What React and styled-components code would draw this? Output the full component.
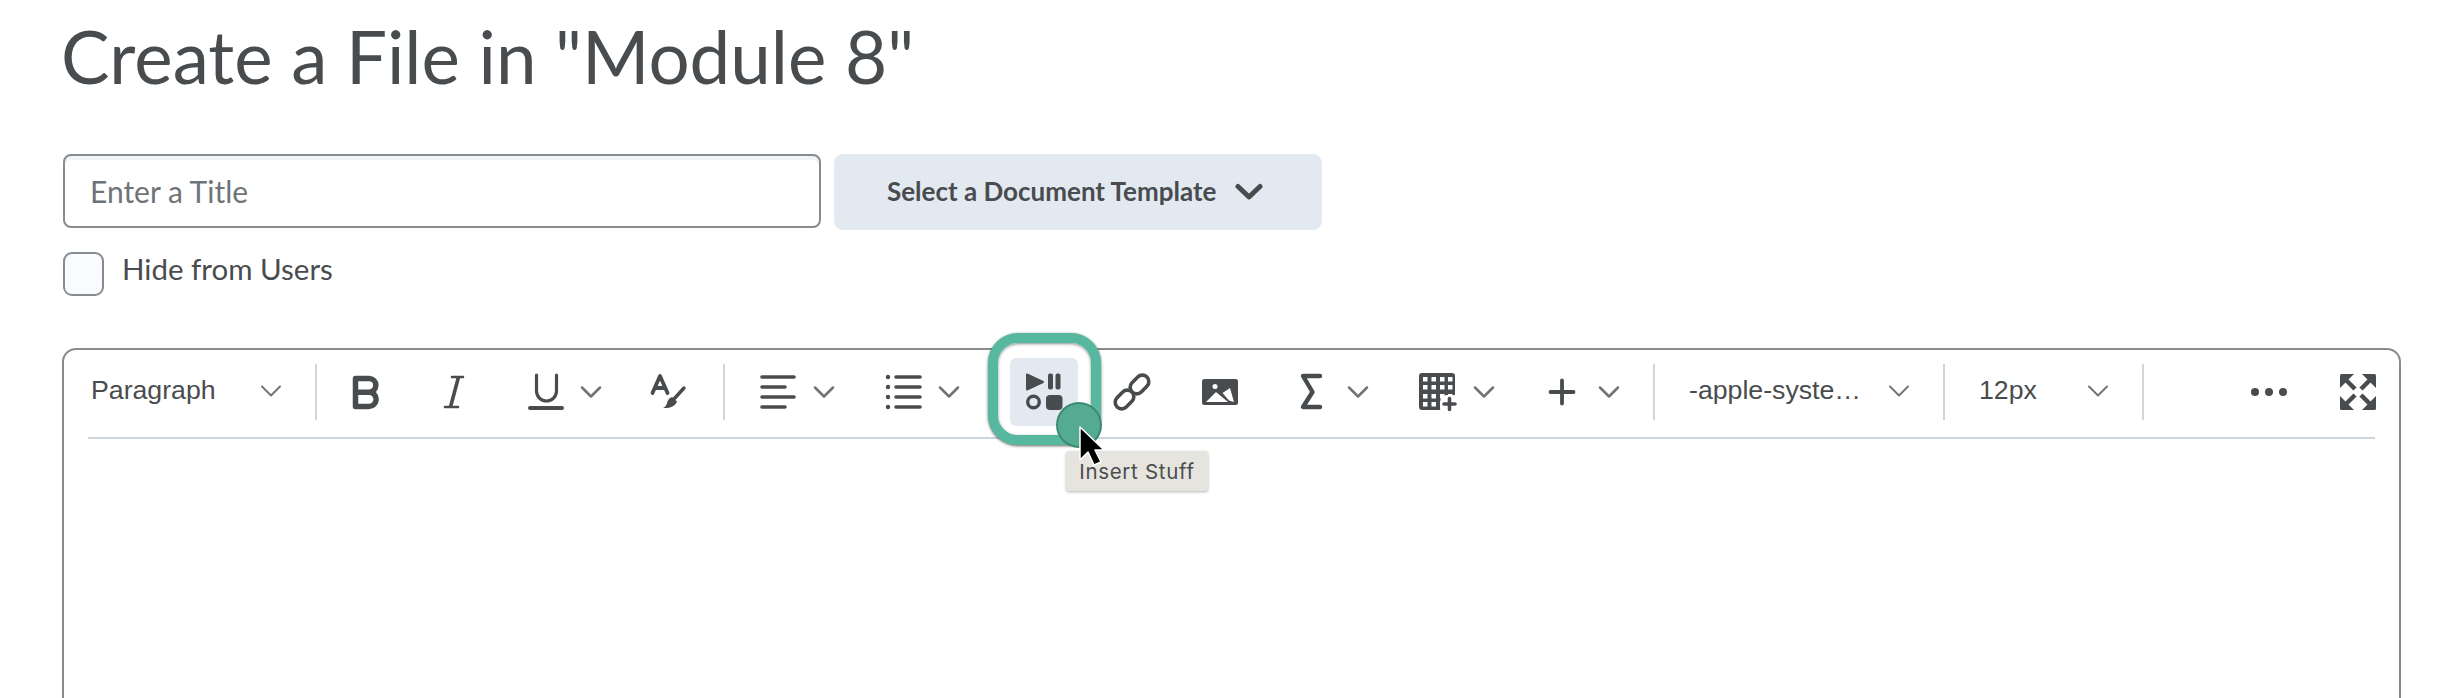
import React from "react";
import styled, { createGlobalStyle } from "styled-components";

const Global = createGlobalStyle`
  html, body { margin: 0; padding: 0; background: #fff; }
  body { font-family: Lato, "Liberation Sans", sans-serif; color: #494c4e; }
`;

const DARK = "#494c4e";

const Page = styled.div`
  height: 698px;
  overflow: hidden;
  box-sizing: border-box;
  padding: 0 51px 0 63px;
`;
const Title = styled.h1`
  margin: 0 0 0 -2px;
  height: 154px;
  padding-top: 10px;
  box-sizing: border-box;
  font: 400 72.7px/92px Lato, sans-serif;
  color: ${DARK};
`;
const FormRow = styled.div`
  display: flex;
  align-items: flex-start;
  gap: 13px;
`;
const TitleInput = styled.input`
  box-sizing: border-box;
  width: 758px;
  height: 74px;
  padding: 0 25px;
  border: 2px solid #868c8f;
  border-radius: 8px;
  background: #fff;
  box-shadow: inset 0 4px 0 #f2f3f4;
  font: 400 30px Lato, sans-serif;
  outline: none;
  &::placeholder { color: #6e7477; opacity: 1; }
`;
const TemplateButton = styled.button`
  box-sizing: border-box;
  width: 488px;
  height: 76px;
  padding: 0 0 2px 53px;
  display: flex;
  align-items: center;
  gap: 18px;
  border: 0;
  border-radius: 9px;
  background: #e3e9f1;
  color: ${DARK};
  font: 700 26px Lato, sans-serif;
`;
const CheckRow = styled.label`
  display: flex;
  align-items: flex-start;
  gap: 18px;
  margin-top: 22px;
  font: 400 29.5px/34px Lato, sans-serif;
  color: ${DARK};
`;
const CheckBox = styled.span`
  box-sizing: border-box;
  display: block;
  width: 41px;
  height: 44px;
  border: 2px solid #868c8f;
  border-radius: 9px;
  background: #f9fbff;
`;
const Editor = styled.section`
  box-sizing: border-box;
  margin: 52px 0 0 -1px;
  height: 500px;
  border: 2px solid #868c8f;
  border-radius: 14px;
  padding: 0 24px 0 24px;
  background: #fff;
`;
const Toolbar = styled.div`
  display: flex;
  align-items: center;
  height: 89px;
  box-sizing: border-box;
  padding: 14px 0 17px;
  border-bottom: 2px solid #ced5db;
`;
const Separator = styled.div`
  flex: none;
  width: 2px;
  height: 56px;
  background: #ced5db;
`;
const Select = styled.div`
  flex: none;
  box-sizing: border-box;
  width: ${(p) => p.$w}px;
  height: 56px;
  padding: 0 33px 3px ${(p) => p.$pl}px;
  display: flex;
  align-items: center;
  justify-content: space-between;
  font: 400 26.7px "Liberation Sans", Arial, sans-serif;
  color: ${DARK};
`;
const Group = styled.div`
  flex: none;
  display: flex;
  align-items: center;
  padding: 0 ${(p) => p.$pr || 0}px 0 ${(p) => p.$pl || 0}px;
`;
const EndGroup = styled(Group)`
  margin-left: auto;
  margin-right: -3px;
`;
const Cell = styled.div`
  flex: none;
  display: flex;
  align-items: center;
  justify-content: center;
  width: ${(p) => p.$w || 88}px;
  height: 56px;
  margin-left: ${(p) => p.$ml || 0}px;
`;
const EndCell = styled(Cell)`
  justify-content: flex-end;
`;
const SplitCell = styled(Cell)`
  justify-content: flex-start;
  padding-left: 13px;
  box-sizing: border-box;
`;
const IconSlot = styled.div`
  flex: none;
  width: 68px;
  display: flex;
  justify-content: center;
`;
const ArrowSlot = styled.div`
  flex: none;
  width: 26px;
  display: flex;
  justify-content: center;
`;
const ActiveButton = styled.div`
  position: relative;
  width: 68px;
  height: 68px;
`;
const Ring = styled.div`
  position: absolute;
  left: -22px;
  right: -23px;
  top: -25px;
  bottom: -19px;
  border: 10px solid #57b8a0;
  border-radius: 30px;
  background: #fff;
  box-shadow: 0 1px 3px rgba(0, 0, 0, 0.6), inset 0 1px 3px rgba(0, 0, 0, 0.45);
`;
const ActiveFace = styled.div`
  position: absolute;
  inset: 0;
  border-radius: 6px;
  background: #e3e9f1;
  display: flex;
  align-items: center;
  justify-content: center;
`;
const Dot = styled.div`
  position: absolute;
  left: 46px;
  top: 44px;
  width: 46px;
  height: 46px;
  box-sizing: border-box;
  border-radius: 50%;
  background: #55ab91;
  border: 2px solid #3b8a72;
`;
const Tooltip = styled.div`
  position: absolute;
  left: 56px;
  top: 93px;
  width: 142px;
  height: 40px;
  box-sizing: border-box;
  display: flex;
  align-items: center;
  justify-content: center;
  background: #e5e4df;
  border-radius: 3px;
  box-shadow: 0 1px 3px rgba(0, 0, 0, 0.3);
  font: 400 20.5px Inter, sans-serif;
  letter-spacing: 0.7px;
  color: #4c4c4c;
  white-space: nowrap;
`;
const Pointer = styled.svg`
  position: absolute;
  left: 67px;
  top: 66px;
`;

const Icon = ({ children }) => (
  <svg width="40" height="40" viewBox="0 0 40 40" fill="none" stroke={DARK} strokeLinecap="round" strokeLinejoin="round">
    {children}
  </svg>
);
const Chevron = ({ w = 2.5 }) => (
  <svg width="22" height="14" viewBox="0 0 22 14" fill="none" stroke="#6f7478" strokeWidth={w} strokeLinecap="round" strokeLinejoin="round">
    <path d="M2 2.5l9 9 9-9" />
  </svg>
);
const BigChevron = () => (
  <svg width="30" height="18" viewBox="0 0 30 18" fill="none" stroke={DARK} strokeWidth="5" strokeLinecap="round" strokeLinejoin="round">
    <path d="M4 4.500L15 15 26 4.500" />
  </svg>
);

const Bold = () => (
  <Icon><path strokeWidth="5.500" d="M10.500 6.500H24a6.700 6.700 0 0 1 0 13.700H10.500M24 20.200a7 7 0 0 1 0 14.300H10.500V6.500" /></Icon>
);
const Italic = () => (
  <Icon><path strokeWidth="2.600" d="M19 5h11M12 35h13" /><path strokeWidth="3.600" strokeLinecap="butt" d="M25.500 5L17.500 35" /></Icon>
);
const Underline = () => (
  <Icon>
    <path strokeWidth="3.200" d="M12.500 3V19a10 10 0 0 0 20 0V3" />
    <path strokeWidth="4" d="M6 36H38" />
  </Icon>
);
const TextColor = () => (
  <Icon>
    <path strokeWidth="3.800" d="M4.500 21L12 4l7.500 17M7.500 16H17" />
    <path strokeWidth="3.400" d="M36 16L26 27" />
    <path fill={DARK} stroke="none" d="M15 36c6 .5 12-1 14-6.500l-5-4.500c-3 1-4.500 3.500-5 6-.5 2.500-2 4-4 5z" />
  </Icon>
);
const AlignLeft = () => (
  <Icon><path strokeWidth="3.600" d="M5 5H37M5 15H28M5 25H37M5 35H28" /></Icon>
);
const BulletList = () => (
  <Icon>
    <path strokeWidth="3.600" d="M14 5H38M14 15H38M14 25H38M14 35H38" />
    <g fill={DARK} stroke="none"><circle cx="6" cy="5" r="2.200" /><circle cx="6" cy="15" r="2.200" /><circle cx="6" cy="25" r="2.200" /><circle cx="6" cy="35" r="2.200" /></g>
  </Icon>
);
const InsertStuff = () => (
  <Icon>
    <path fill={DARK} strokeWidth="2" d="M3 2.500v15l16-7.500z" />
    <g fill={DARK} stroke="none">
      <rect x="24" y="1.500" width="5" height="16" rx="2" />
      <rect x="31.500" y="1.500" width="5" height="16" rx="2" />
      <rect x="22" y="23" width="16.500" height="15" rx="4" />
    </g>
    <circle cx="9.500" cy="30" r="5.800" strokeWidth="3.400" />
  </Icon>
);
const LinkIcon = () => (
  <Icon>
    <g strokeWidth="3.600">
      <rect x="17" y="6" width="21" height="13" rx="6.500" transform="rotate(-45 27.500 12.500)" />
      <rect x="2" y="21" width="21" height="13" rx="6.500" transform="rotate(-45 12.500 27.500)" />
    </g>
  </Icon>
);
const ImageIcon = () => (
  <Icon>
    <rect x="2" y="7" width="36" height="26" rx="2.500" fill={DARK} stroke="none" />
    <circle cx="15" cy="14.500" r="2.500" fill="#fff" stroke="none" />
    <path fill="#fff" stroke="none" d="M6 30l10-10 12 10zM22.500 21l7.500-5 4 14-5-1.500z" />
  </Icon>
);
const Sigma = () => (
  <Icon><path strokeWidth="4.400" d="M29 4H12l9.500 16L12 35h17" /></Icon>
);
const TableIcon = () => {
  const cols = [6, 14.5, 23, 31];
  const rows = [5, 13, 22, 30];
  return (
    <Icon>
      <rect x="2" y="1" width="36" height="37" rx="3" fill={DARK} stroke="none" />
      {rows.map((y) => cols.map((x) => <rect key={`${x}-${y}`} x={x} y={y} width="4.500" height="4.500" fill="#fff" stroke="none" />))}
      <rect x="23" y="23" width="20" height="20" rx="7" fill="#fff" stroke="none" />
      <path strokeWidth="3.600" d="M27 32H38M32.500 26.500V37.500" />
    </Icon>
  );
};
const Plus = () => (
  <Icon><path strokeWidth="3.800" d="M8.500 20H31.500M20 8.500V31.500" /></Icon>
);
const More = () => (
  <Icon>
    <g fill={DARK} stroke="none"><circle cx="6" cy="20" r="4" /><circle cx="20" cy="20" r="4" /><circle cx="34" cy="20" r="4" /></g>
  </Icon>
);
const Fullscreen = () => (
  <Icon>
    <g fill={DARK} stroke="none">
      <path d="M2 3.500q0-1.500 1.500-1.500H16l-14 14z" />
      <path d="M38 3.500q0-1.500-1.500-1.500H24l14 14z" />
      <path d="M2 36.500q0 1.500 1.500 1.500H16L2 24z" />
      <path d="M38 36.500q0 1.500-1.500 1.500H24l14-14z" />
    </g>
    <path strokeWidth="4.500" strokeLinecap="butt" d="M8 8l9 9M32 8l-9 9M8 32l9-9M32 32l-9-9" />
  </Icon>
);

const Split = ({ w, children }) => (
  <SplitCell $w={w}>
    <IconSlot>{children}</IconSlot>
    <ArrowSlot><Chevron /></ArrowSlot>
  </SplitCell>
);

export default function App() {
  return (
    <Page>
      <Global />
      <Title>Create a File in "Module 8"</Title>
      <FormRow>
        <TitleInput placeholder="Enter a Title" />
        <TemplateButton>Select a Document Template <BigChevron /></TemplateButton>
      </FormRow>
      <CheckRow><CheckBox />Hide from Users</CheckRow>
      <Editor>
        <Toolbar>
          <Select $w={227} $pl={3}>Paragraph<Chevron w={2} /></Select>
          <Separator />
          <Group $pl={4} $pr={11}>
            <Cell><Bold /></Cell>
            <Cell><Italic /></Cell>
            <Split w={127}><Underline /></Split>
            <Cell><TextColor /></Cell>
          </Group>
          <Separator />
          <Group $pl={5} $pr={13}>
            <Split w={125}><AlignLeft /></Split>
            <Split w={125}><BulletList /></Split>
            <Cell $ml={20}>
              <ActiveButton>
                <Ring />
                <ActiveFace><InsertStuff /></ActiveFace>
                <Dot />
                <Tooltip>Insert Stuff</Tooltip>
                <Pointer width="32" height="46" viewBox="0 0 32 46">
                  <path d="M3 3v33l8-8 6 13 7-3-6-12h9z" fill="#000" stroke="#fff" strokeWidth="1.500" strokeLinejoin="round" />
                </Pointer>
              </ActiveButton>
            </Cell>
            <Cell><LinkIcon /></Cell>
            <Cell><ImageIcon /></Cell>
            <Split w={126}><Sigma /></Split>
            <Split w={125}><TableIcon /></Split>
            <Split w={125}><Plus /></Split>
          </Group>
          <Separator />
          <Select $w={288} $pl={34}>-apple-syste…<Chevron w={2} /></Select>
          <Separator />
          <Select $w={197} $pl={34}>12px<Chevron w={2} /></Select>
          <Separator />
          <EndGroup>
            <Cell><More /></Cell>
            <EndCell $w={65}><Fullscreen /></EndCell>
          </EndGroup>
        </Toolbar>
      </Editor>
    </Page>
  );
}
